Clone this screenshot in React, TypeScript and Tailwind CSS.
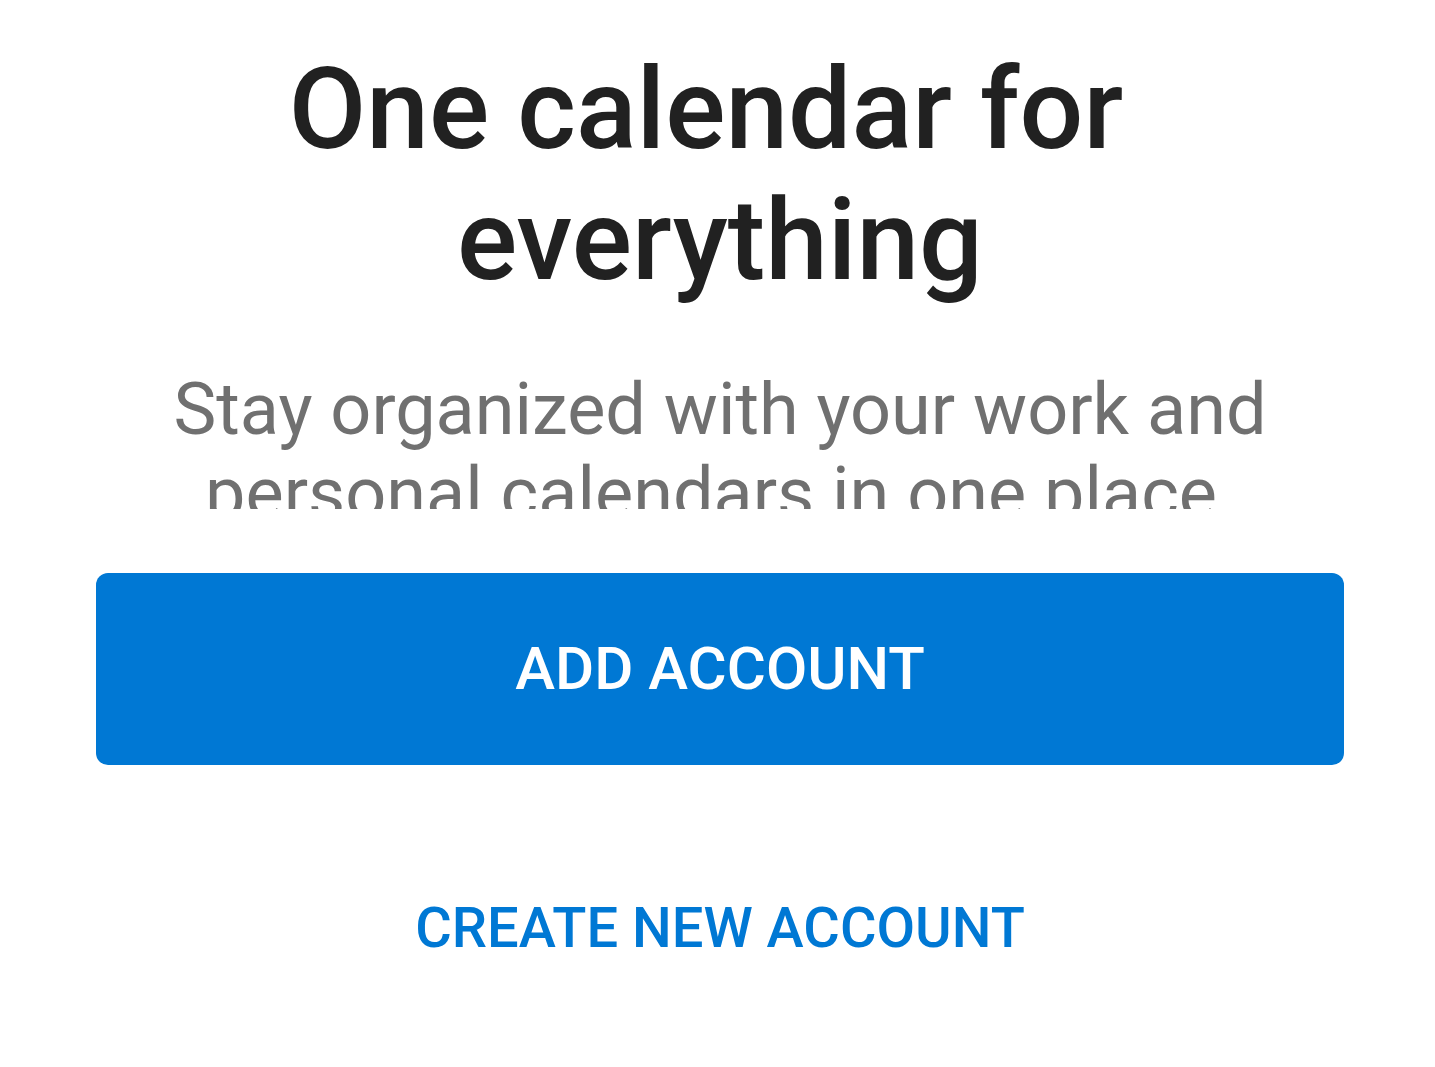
export default function App() {
  return (
    <div className="min-h-screen bg-white" style={{ fontFamily: 'Roboto, "Noto Sans", sans-serif' }}>
      <div className="flex flex-col items-center pl-[96px] pr-[91px]">
        {/* Title */}
        <h1 className="mt-[44px] text-center text-[112.5px] font-medium leading-[131px] text-[#212121]">
          One calendar for{'\u00a0'}
          <br />
          everything
        </h1>

        {/* Subtitle, clipped like the original */}
        <div className="mt-[62px] h-[141px] overflow-hidden">
          <p className="text-center text-[72px] leading-[84px] text-[#707070]">
            Stay organized with your work and personal calendars in one place{'\u00a0'}
          </p>
        </div>

        {/* Primary action */}
        <button className="mt-[64px] flex h-[192px] w-full items-center justify-center rounded-[12px] bg-[#0078d4] text-[60px] font-medium text-white">
          ADD ACCOUNT
        </button>

        {/* Secondary action */}
        <button className="mt-[112px] py-4 text-[56px] font-medium leading-[70px] text-[#0078d4]">
          CREATE NEW ACCOUNT
        </button>
      </div>
    </div>
  )
}
